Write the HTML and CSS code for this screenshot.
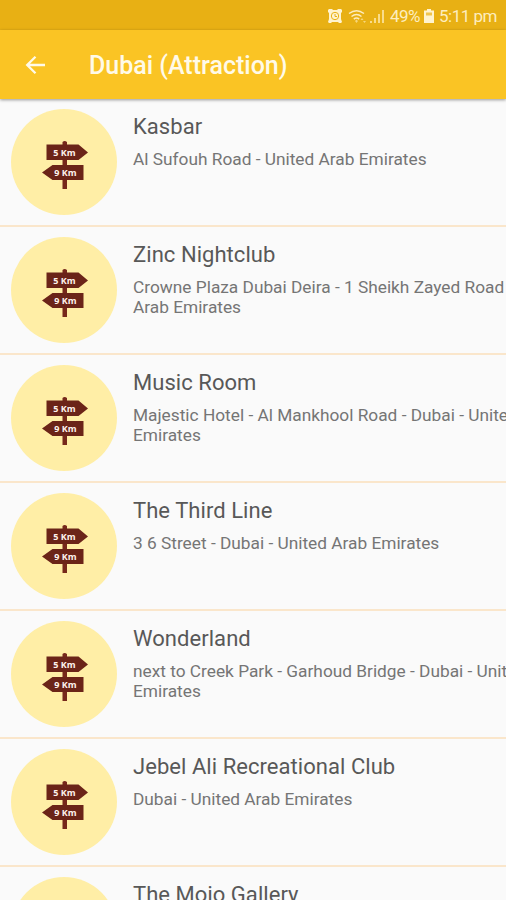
FILE: index.html
```html
<!DOCTYPE html>
<html lang="en">
<head>
    <meta charset="UTF-8">
    <meta name="viewport" content="width=device-width, initial-scale=1.0">
    <title>Dubai (Attraction)</title>
    <link rel="stylesheet" href="styles.css">
</head>
<body>
    <div class="status-bar">
        <svg class="alarm" width="14" height="14" viewBox="0 0 14 14">
            <path d="M1 0h3l1 1h4l1-1h3l1 1v2l-1 1v6l1 3-1 1h-2l-1-1H4l-1 1H1l-1-1 1-3V4L0 3V1z" fill="#fff3cf"/>
            <circle cx="7" cy="7" r="3.700" fill="none" stroke="#e8b014" stroke-width="1"/>
            <path d="M7 5v2.500h2" fill="none" stroke="#e8b014" stroke-width="1"/>
        </svg>
        <svg class="wifi" width="19" height="15" viewBox="0 0 19 15">
            <g fill="none" stroke="#fdedbf" stroke-width="1.5">
                <path d="M1 4.500Q8.500-1 16 4.500"/>
                <path d="M3.500 7.500Q8.500 3.500 13.500 7.500"/>
                <path d="M5.800 10.200Q8.500 8 11.200 10.200"/>
            </g>
            <path d="M7 12l1.500-1.500L10 12l-1.500 2zM12.500 11l1.500-2 1.500 2zM15 12h3l-1.500 2z" fill="#f6d67c"/>
        </svg>
        <svg class="signal" width="15" height="15" viewBox="0 0 15 15">
            <path d="M0 12h2v2H0zM4 9h2v5H4zM8 5h2v9H8zM12 1h2v13h-2z" fill="#f9dc8b"/>
        </svg>
        <span class="percent">49%</span>
        <svg class="battery" width="10" height="14" viewBox="0 0 10 14">
            <path d="M3 0h4v1.500h3V14H0V1.500h3z" fill="#fff3cf"/>
            <path d="M2 3.500h6v3H2z" fill="#efc44d"/>
        </svg>
        <span class="clock">5:11 pm</span>
    </div>

    <div class="toolbar">
        <svg class="back" width="22" height="20" viewBox="0 0 22 20">
            <path d="M20 10H2.500M10.500 1.700L2.200 10l8.300 8.300" fill="none" stroke="#fffae8" stroke-width="2.300"/>
        </svg>
        <h1>Dubai (Attraction)</h1>
    </div>

    <!-- Signpost shared by all list rows -->
    <svg class="defs" width="0" height="0">
        <symbol id="signpost" viewBox="0 0 48 50">
            <path d="M20.500 2q2-2 4.500 0v47h-4.500z" fill="#76281b"/>
            <path d="M4.500 4.500h32l9.500 8-9.500 7.500h-32zM41.500 25h-31L0 32.500 10.500 40h31z" fill="#6b2418"/>
            <text x="22.500" y="15.700" class="sign-text">5 Km</text>
            <text x="23.500" y="35.700" class="sign-text">9 Km</text>
        </symbol>
    </svg>

    <div class="list">
        <div class="row">
            <div class="thumb"><svg><use href="#signpost"/></svg></div>
            <div class="info">
                <h2>Kasbar</h2>
                <p>Al Sufouh Road - United Arab Emirates</p>
            </div>
        </div>
        <div class="row">
            <div class="thumb"><svg><use href="#signpost"/></svg></div>
            <div class="info">
                <h2>Zinc Nightclub</h2>
                <p>Crowne Plaza Dubai Deira - 1 Sheikh Zayed Road<br>Arab Emirates</p>
            </div>
        </div>
        <div class="row">
            <div class="thumb"><svg><use href="#signpost"/></svg></div>
            <div class="info">
                <h2>Music Room</h2>
                <p>Majestic Hotel - Al Mankhool Road - Dubai - Unite<br>Emirates</p>
            </div>
        </div>
        <div class="row">
            <div class="thumb"><svg><use href="#signpost"/></svg></div>
            <div class="info">
                <h2>The Third Line</h2>
                <p>3 6 Street - Dubai - United Arab Emirates</p>
            </div>
        </div>
        <div class="row">
            <div class="thumb"><svg><use href="#signpost"/></svg></div>
            <div class="info">
                <h2>Wonderland</h2>
                <p>next to Creek Park - Garhoud Bridge - Dubai - Unit<br>Emirates</p>
            </div>
        </div>
        <div class="row">
            <div class="thumb"><svg><use href="#signpost"/></svg></div>
            <div class="info">
                <h2>Jebel Ali Recreational Club</h2>
                <p>Dubai - United Arab Emirates</p>
            </div>
        </div>
        <div class="row">
            <div class="thumb"></div>
            <div class="info">
                <h2>The Mojo Gallery</h2>
            </div>
        </div>
    </div>
</body>
</html>
```

FILE: styles.css
```css
* { box-sizing: border-box; }
body { margin: 0; height: 900px; overflow: hidden; display: flex; flex-direction: column; font-family: Roboto, "Liberation Sans", sans-serif; background: #fafafa; }
h1, h2, p { margin: 0; white-space: nowrap; }

.status-bar { flex: none; height: 30px; padding: 2px 9px 0 0; display: flex; align-items: center; justify-content: flex-end; background: #e8b014; color: #fdedbf; font-size: 17px; }
.alarm { margin-right: 6px; }
.wifi { margin-right: 3px; }
.signal { margin-right: 5px; }
.percent { margin-right: 4px; letter-spacing: -0.5px; }
.battery { margin-right: 5px; }
.clock { letter-spacing: -0.5px; }

.toolbar { flex: none; height: 69px; padding: 1px 0 0 25px; display: flex; align-items: center; background: #fac424; box-shadow: 0 1px 3px rgba(0, 0, 0, 0.4); z-index: 1; }
.back { margin-right: 42px; }
h1 { font-size: 25px; font-weight: 500; color: #fffae8; }

.defs { display: block; flex: none; }
.list { flex: 1; min-height: 0; overflow: hidden; }
.row { height: 128px; padding: 10px 0 0 11px; display: flex; gap: 16px; border-bottom: 2px solid #fae6cb; }
.thumb { flex: none; width: 106px; height: 106px; border-radius: 50%; background: #ffeea6; padding: 31px 0 0 31px; }
.thumb svg { display: block; width: 48px; height: 50px; }
.sign-text { font-family: "Open Sans", sans-serif; font-size: 9px; font-weight: 700; fill: #fff3ee; text-anchor: middle; }
.info { padding-top: 5px; }
h2 { font-size: 22px; line-height: 26px; font-weight: 400; letter-spacing: 0.05px; color: #585858; }
p { margin-top: 9px; font-size: 17.3px; line-height: 20px; color: #757575; }
```
